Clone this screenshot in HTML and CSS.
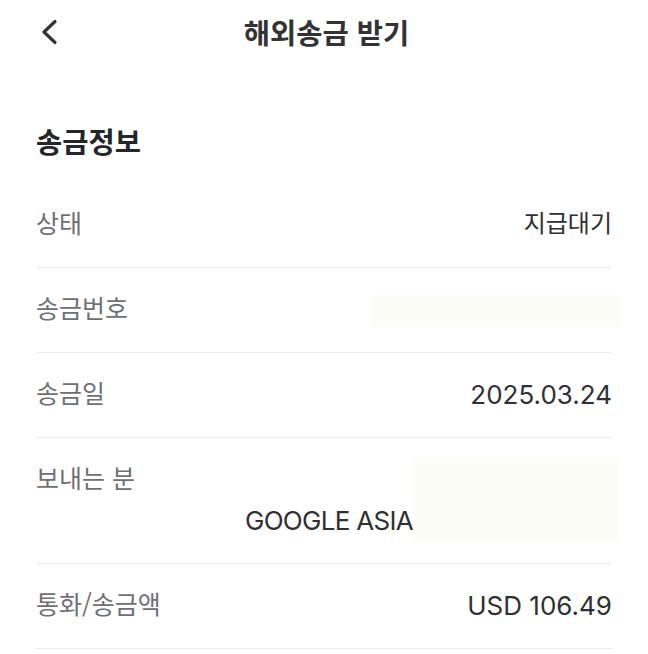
FILE: index.html
```html
<!DOCTYPE html>
<html lang="ko">
<head>
  <meta charset="UTF-8" />
  <title>해외송금 받기</title>
  <link rel="stylesheet" href="styles.css">
</head>
<body>
  <header class="topbar">
    <button class="back" aria-label="뒤로">
      <svg width="18" height="26" viewBox="0 0 18 26">
        <polyline points="14,2.5 3,13 14,23.5" fill="none" stroke="#333" stroke-width="3.2" stroke-linecap="round" stroke-linejoin="round" />
      </svg>
    </button>
    <h1 class="title">해외송금 받기</h1>
    <span></span>
  </header>

  <main class="content">
    <h2 class="section-title">송금정보</h2>

    <div class="info-list">
      <div class="info-row">
        <span class="label">상태</span>
        <span class="value ko">지급대기</span>
      </div>
      <div class="info-row">
        <span class="label">송금번호</span>
        <span class="mask mask-line"></span>
      </div>
      <div class="info-row">
        <span class="label">송금일</span>
        <span class="value">2025.03.24</span>
      </div>
      <!-- sender name is partly hidden -->
      <div class="info-row info-row-tall">
        <span class="label">보내는 분</span>
        <div class="value-wrap">
          <span class="value name">GOOGLE ASIA</span>
          <span class="mask mask-block"></span>
        </div>
      </div>
      <div class="info-row">
        <span class="label">통화/송금액</span>
        <span class="value">USD 106.49</span>
      </div>
    </div>
  </main>
</body>
</html>
```

FILE: styles.css
```css
body {
  margin: 0;
  background-color: white;
  font-family: "Noto Sans CJK KR", "Noto Sans", sans-serif;
  color: #333;
}

.topbar {
  display: grid;
  grid-template-columns: 1fr auto 1fr;
  align-items: center;
  height: 64px;
  padding: 0 36px 0 41px;
}

.back {
  justify-self: start;
  display: flex;
  padding: 0;
  border: none;
  background: none;
  cursor: pointer;
}

.title {
  margin: 0;
  font-size: 28.5px;
  font-weight: 600;
  line-height: 34px;
  color: #333;
}

.content {
  padding: 0 36px;
}

.section-title {
  margin: 61px 0 26px;
  font-size: 28.5px;
  font-weight: 700;
  line-height: 32px;
  color: #252628;
}

.info-row {
  display: flex;
  justify-content: space-between;
  align-items: center;
  padding: 27px 0 33px;
  border-bottom: 1px solid #eeeeee;
}

.label {
  font-size: 25px;
  line-height: 24px;
  color: #6d7075;
}

/* latin text sits a bit high in the line box */
.value {
  padding-top: 3px;
  margin-bottom: -3px;
  font-family: Inter, "Noto Sans CJK KR", sans-serif;
  font-size: 26px;
  line-height: 24px;
  color: #2f3033;
}

.value.ko {
  padding-top: 0;
  margin-bottom: 0;
  font-family: "Noto Sans CJK KR", sans-serif;
  font-size: 24px;
}

.value.name {
  letter-spacing: -0.7px;
}

.mask {
  display: inline-block;
  background-color: #fcfcf7;
}

.mask-line {
  width: 248px;
  height: 32px;
  margin: 0 -8px -8px 0;
}

.info-row-tall {
  align-items: flex-start;
  padding-bottom: 20px;
}

.value-wrap {
  display: flex;
  align-items: flex-end;
  margin: -8px -6px 0 0;
}

.value-wrap .value {
  margin-bottom: 10px;
}

.mask-block {
  width: 205px;
  height: 86px;
}
```
